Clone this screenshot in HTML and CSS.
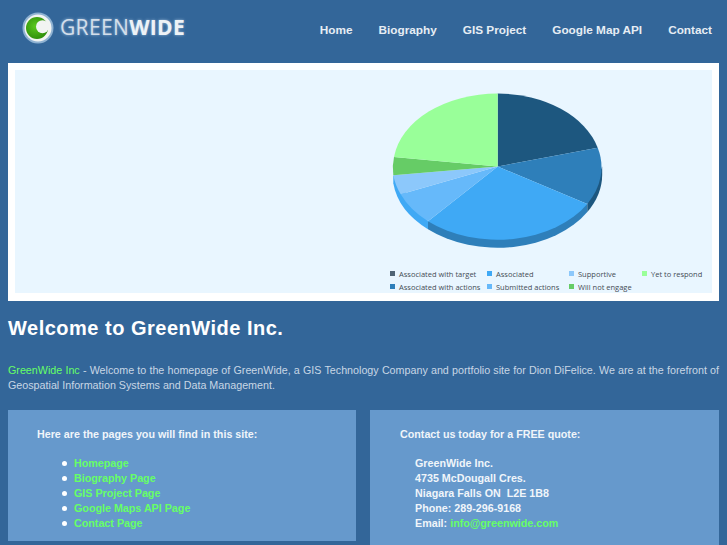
FILE: index.html
```html
<!DOCTYPE html>
<html lang="en">
<head>
    <meta charset="UTF-8">
    <meta name="viewport" content="width=device-width, initial-scale=1.0">
    <title>GreenWide Inc.</title>
    <link rel="stylesheet" href="styles.css">
</head>
<body>
    <div class="header">
        <a class="logo" href="#">
            <svg class="logo-mark" width="36" height="32" viewBox="0 0 36 32">
                <defs>
                    <radialGradient id="ball" cx="0.42" cy="0.42" r="0.6">
                        <stop offset="0" stop-color="#5cc81e"/>
                        <stop offset="1" stop-color="#2f8f0a"/>
                    </radialGradient>
                </defs>
                <circle cx="18" cy="16" r="15.5" fill="#8fb2d2"/>
                <circle cx="18" cy="16" r="13.5" fill="#f2f4f2"/>
                <circle cx="17" cy="16" r="11" fill="url(#ball)"/>
                <circle cx="22.5" cy="14.7" r="6.5" fill="#f2f4f2"/>
            </svg>
            <span class="logo-text">GREEN<b>WIDE</b></span>
        </a>
        <div class="nav">
            <a href="#">Home</a>
            <a href="#">Biography</a>
            <a href="#">GIS Project</a>
            <a href="#">Google Map API</a>
            <a href="#">Contact</a>
        </div>
    </div>

    <div class="banner">
        <svg class="chart" width="697" height="223" viewBox="15 70 697 223">
            <!-- pie side -->
            <path d="M393.3 175.3 L393.3 183.3 A104.5 73 0 0 0 428 229.3 L428 221.3 Z" fill="#3fa9f5"/>
            <path d="M428 221.3 L428 229.3 A104.5 73 0 0 0 587.3 212 L587.3 204 Z" fill="#2e7fba"/>
            <path d="M587.3 204 L587.3 212 A104.5 73 0 0 0 602.2 174.5 L602.2 166.5 Z" fill="#1d577f"/>
            <!-- pie top -->
            <path d="M497.7 166.5 L497.7 93.5 A104.5 73 0 0 1 597.7 147.7 Z" fill="#1d577f"/>
            <path d="M497.7 166.5 L597.7 147.7 A104.5 73 0 0 1 587.3 204 Z" fill="#2e7fba"/>
            <path d="M497.7 166.5 L587.3 204 A104.5 73 0 0 1 428 221.3 Z" fill="#3fa9f5"/>
            <path d="M497.7 166.5 L428 221.3 A104.5 73 0 0 1 400.7 194.3 Z" fill="#66b9fa"/>
            <path d="M497.7 166.5 L400.7 194.3 A104.5 73 0 0 1 393.3 175.3 Z" fill="#8cc8fb"/>
            <path d="M497.7 166.5 L393.3 175.3 A104.5 73 0 0 1 394 157 Z" fill="#66cc66"/>
            <path d="M497.7 166.5 L394 157 A104.5 73 0 0 1 497.7 93.5 Z" fill="#99ff99"/>
            <!-- legend -->
            <rect x="390" y="271" width="5" height="5" fill="#4f6475"/>
            <rect x="390" y="284" width="5" height="5" fill="#2e7fba"/>
            <rect x="487" y="271" width="5" height="5" fill="#3fa9f5"/>
            <rect x="487" y="284" width="5" height="5" fill="#66b9fa"/>
            <rect x="569" y="271" width="5" height="5" fill="#8cc8fb"/>
            <rect x="569" y="284" width="5" height="5" fill="#66cc66"/>
            <rect x="642" y="271" width="5" height="5" fill="#99ff99"/>
            <g class="legend">
                <text x="399" y="277">Associated with target</text>
                <text x="399" y="290">Associated with actions</text>
                <text x="496" y="277">Associated</text>
                <text x="496" y="290">Submitted actions</text>
                <text x="578" y="277">Supportive</text>
                <text x="578" y="290">Will not engage</text>
                <text x="651" y="277">Yet to respond</text>
            </g>
        </svg>
    </div>

    <h1>Welcome to GreenWide Inc.</h1>

    <p class="intro"><a href="#">GreenWide Inc</a> - Welcome to the homepage of GreenWide, a GIS Technology Company and portfolio site for Dion DiFelice. We are at the forefront of Geospatial Information Systems and Data Management.</p>

    <div class="panels">
        <div class="panel">
            <p class="panel-title">Here are the pages you will find in this site:</p>
            <ul>
                <li><a href="#">Homepage</a></li>
                <li><a href="#">Biography Page</a></li>
                <li><a href="#">GIS Project Page</a></li>
                <li><a href="#">Google Maps API Page</a></li>
                <li><a href="#">Contact Page</a></li>
            </ul>
        </div>
        <div class="panel panel-contact">
            <p class="panel-title">Contact us today for a FREE quote:</p>
            <p class="address">GreenWide Inc.<br>
                4735 McDougall Cres.<br>
                Niagara Falls ON&nbsp; L2E 1B8<br>
                Phone: 289-296-9168<br>
                Email: <a href="#">info@greenwide.com</a></p>
        </div>
    </div>
</body>
</html>
```

FILE: styles.css
```css
html {
    overflow: hidden;
}
body {
    margin: 0;
    padding: 0 8px;
    font-family: "Liberation Sans", Arial, sans-serif;
    font-size: 10.72px;
    line-height: 15px;
    background-color: #336699;
    color: #c8d6e5;
}
a {
    color: #66ff66;
    text-decoration: none;
}
.header {
    display: flex;
    justify-content: space-between;
    align-items: center;
    height: 63px;
}
.logo {
    display: flex;
    align-items: center;
    gap: 4px;
    margin-left: 12px;
    margin-top: -8px;
}
.logo-text {
    font-family: "Open Sans", sans-serif;
    font-size: 21px;
    letter-spacing: 0.35px;
    color: #d3deea;
    text-shadow: 0 0 3px #9dbcd9;
}
.logo-text b {
    font-weight: 700;
    color: #eef2f6;
}
.nav {
    display: flex;
    gap: 26px;
    margin-top: -4px;
    margin-right: 7px;
}
.nav a {
    color: #e6edf4;
    font-size: 11.79px;
    font-weight: bold;
}
.banner {
    background-color: #ffffff;
    padding: 7px 7px 8px;
    width: 697px;
    height: 223px;
}
.chart {
    display: block;
    background-color: #e9f6ff;
}
.legend {
    font-family: "Open Sans", sans-serif;
    font-size: 7.5px;
    fill: #444c55;
}
h1 {
    margin: 15px 0 0;
    font-size: 20px;
    line-height: 24px;
    letter-spacing: 0.5px;
    color: #ffffff;
}
.intro {
    margin: 23px 0 0;
    text-align: justify;
}
.panels {
    display: flex;
    align-items: flex-start;
    gap: 14px;
    margin-top: 17px;
}
.panel {
    width: 348px;
    background-color: #6699cc;
    padding: 17px 0 10px 29px;
    box-sizing: border-box;
    font-weight: bold;
    color: #f0f5fa;
}
.panel-contact {
    width: 349px;
    padding-left: 30px;
    padding-bottom: 40px;
}
.panel-title {
    margin: 0;
}
.panel ul {
    margin: 14px 0 0;
    padding: 0 0 0 37px;
    list-style: none;
}
.panel li::before {
    content: "";
    display: inline-block;
    width: 5px;
    height: 5px;
    margin: 0 7px 1px -12px;
    border-radius: 50%;
    background-color: #ffffff;
}
.address {
    margin: 14px 0 0 15px;
}
```
